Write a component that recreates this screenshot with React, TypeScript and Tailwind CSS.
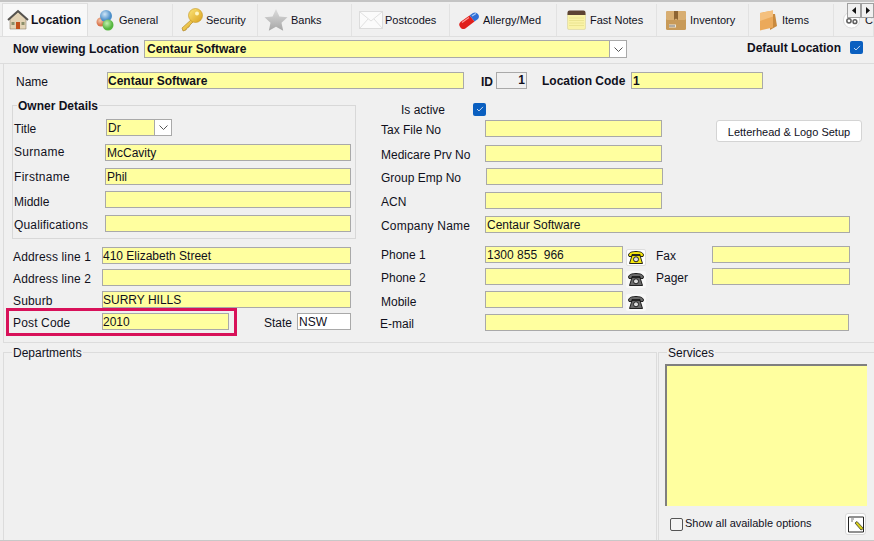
import React from "react";

const HouseIcon = () => (
  <svg viewBox="0 0 22 22" className="w-[22px] h-[22px]">
    <path d="M3 10v10h16V10L11 3z" fill="#e3d3b5" stroke="#8f8168" strokeWidth="0.6" />
    <path d="M1 11 11 2l10 9" fill="none" stroke="#55534f" strokeWidth="2" />
    <rect x="9" y="13" width="4" height="7" fill="#c2501a" />
    <rect x="4.5" y="13" width="3" height="3" fill="#8b8e6a" />
    <rect x="14.5" y="13" width="3" height="3" fill="#8b8e6a" />
  </svg>
);

const GeneralIcon = () => (
  <svg viewBox="0 0 22 22" className="w-[22px] h-[22px]">
    <defs>
      <radialGradient id="gb" cx="40%" cy="35%"><stop offset="0" stopColor="#cfe6f8" /><stop offset="1" stopColor="#4c8fc9" /></radialGradient>
      <radialGradient id="gg" cx="40%" cy="35%"><stop offset="0" stopColor="#c4f0b0" /><stop offset="1" stopColor="#55b63e" /></radialGradient>
      <radialGradient id="go" cx="40%" cy="35%"><stop offset="0" stopColor="#f4c9ae" /><stop offset="1" stopColor="#d9734a" /></radialGradient>
    </defs>
    <circle cx="6" cy="13" r="4.5" fill="url(#go)" />
    <circle cx="11" cy="7" r="6" fill="url(#gb)" />
    <circle cx="13" cy="16" r="5.5" fill="url(#gg)" />
  </svg>
);

const KeyIcon = () => (
  <svg viewBox="0 0 24 24" className="w-[24px] h-[24px]">
    <defs>
      <linearGradient id="ky" x1="0" y1="0" x2="1" y2="1"><stop offset="0" stopColor="#fde77a" /><stop offset="1" stopColor="#d9a01e" /></linearGradient>
    </defs>
    <path d="M12 11 2 20l1 3 3-1 1-2 2-1 1-2 4-4" fill="url(#ky)" stroke="#a87a1a" strokeWidth="0.6" />
    <circle cx="15.5" cy="7.5" r="7" fill="url(#ky)" stroke="#c39320" strokeWidth="0.6" />
    <circle cx="17" cy="5.5" r="2" fill="#fff6c2" />
  </svg>
);

const StarIcon = () => (
  <svg viewBox="0 0 24 24" className="w-[24px] h-[24px]">
    <defs>
      <linearGradient id="st" x1="0" y1="0" x2="0" y2="1"><stop offset="0" stopColor="#dcdcdc" /><stop offset="1" stopColor="#a6a6a6" /></linearGradient>
    </defs>
    <path d="m12 1 3.4 7.4 8.1.9-6 5.5 1.7 8L12 18.700 4.800 22.800l1.700-8-6-5.500 8.100-.9z" fill="url(#st)" />
  </svg>
);

const MailIcon = () => (
  <svg viewBox="0 0 24 18" className="w-[24px] h-[18px]">
    <rect x="0.500" y="0.500" width="23" height="17" fill="#fbfbfb" stroke="#dcdcdc" />
    <path d="m1 1 11 9 11-9M1 17l8-9M23 17l-8-9" fill="none" stroke="#e1e1e1" />
  </svg>
);

const PillIcon = () => (
  <svg viewBox="0 0 22 18" className="w-[22px] h-[18px]">
    <path d="M11.500 4.500 15 2a4 4 0 0 1 5 6l-3.500 2.500z" fill="#2f6fd6" />
    <path d="M11.500 4.500 3 10.500a4 4 0 0 0 5 6.500l8.500-6.500z" fill="#e0201c" />
    <path d="M4 11.500 11 6.500" stroke="#ff9c97" strokeWidth="1.200" />
    <path d="m14 5 4-2.500" stroke="#a9cdfa" strokeWidth="1.200" />
  </svg>
);

const NotesIcon = () => (
  <svg viewBox="0 0 19 20" className="w-[19px] h-[20px]">
    <rect x="0.500" y="3" width="18" height="16.500" rx="1.500" fill="#faf3a8" stroke="#d8d2a0" strokeWidth="0.600" />
    <path d="M0.500 5V2.500a2 2 0 0 1 2-2h14a2 2 0 0 1 2 2V5z" fill="#5d4334" />
    <path d="M2 8h15M2 10.500h15M2 13h15M2 15.500h15" stroke="#e7df8a" strokeWidth="0.800" />
  </svg>
);

const BoxIcon = () => (
  <svg viewBox="0 0 20 19" className="w-[20px] h-[19px]">
    <rect width="20" height="19" rx="1.500" fill="#c89a58" />
    <rect width="20" height="9" rx="1.500" fill="#d8ae72" />
    <path d="M8 0h4v9l-2-1.500L8 9z" fill="#8d6433" />
    <rect x="3" y="13.500" width="7" height="3" fill="#eee7d8" />
    <path d="M4 14v2M6 14v2M8 14v2" stroke="#555" strokeWidth="0.800" />
  </svg>
);

const FolderIcon = () => (
  <svg viewBox="0 0 20 21" className="w-[20px] h-[21px]">
    <path d="M11 4h5l2 12-7 4z" fill="#c98a3e" />
    <path d="M1 3 14 0.500v17L1 20.500z" fill="#eba95a" />
    <path d="M1 3 14 0.500v6L1 11z" fill="#f4c07e" />
  </svg>
);

const GearsIcon = () => (
  <svg viewBox="0 0 20 20" className="w-[20px] h-[20px]">
    <circle cx="10" cy="10" r="9.500" fill="#fff" stroke="#d5d5d5" />
    <circle cx="7" cy="11" r="2.500" fill="none" stroke="#5f5f5f" strokeWidth="1.800" />
    <circle cx="14" cy="12" r="2.200" fill="none" stroke="#5f5f5f" strokeWidth="1.800" />
  </svg>
);

const PhoneIcon = ({ active }: { active?: boolean }) => (
  <div className={`w-[20px] h-[17px] flex items-center justify-center rounded-[2px] ${active ? "bg-white border border-[#dddddd]" : "bg-[#f8f8f8]"}`}>
    <svg viewBox="0 0 16 13" className="w-[16px] h-[13px]">
      <path d="M0.500 4C1 1 5 0.500 8 0.500S15 1 15.500 4l-.5 1.500h-3V3.500H4v2H1z" fill={active ? "#f5e60a" : "#6a6a6a"} stroke="#111" strokeWidth="0.900" />
      <path d="M4 4.500h8l2.500 8h-13z" fill={active ? "#f5e60a" : "#6a6a6a"} stroke="#111" strokeWidth="0.900" />
      <circle cx="8" cy="8.300" r="2.500" fill="#dddddd" stroke="#111" strokeWidth="0.900" />
    </svg>
  </div>
);

const tabs = [
  { label: "General", width: "w-[85px]", pad: "pl-[7px] gap-[2px]", icon: <GeneralIcon /> },
  { label: "Security", width: "w-[85px]", pad: "pl-[7px] gap-[2px]", icon: <KeyIcon /> },
  { label: "Banks", width: "w-[94px]", pad: "pl-[6px] gap-[3px]", icon: <StarIcon /> },
  { label: "Postcodes", width: "w-[98px]", pad: "pl-[7px] gap-[2px]", icon: <MailIcon /> },
  { label: "Allergy/Med", width: "w-[107px]", pad: "pl-[8px] gap-[3px]", icon: <PillIcon /> },
  { label: "Fast Notes", width: "w-[100px]", pad: "pl-[10px] gap-[4px]", icon: <NotesIcon /> },
  { label: "Inventory", width: "w-[92px]", pad: "pl-[9px] gap-[4px]", icon: <BoxIcon /> },
  { label: "Items", width: "w-[85px]", pad: "pl-[10px] gap-[3px]", icon: <FolderIcon /> },
  { label: "C", width: "w-[40px]", pad: "pl-[9px] gap-[5px]", icon: <GearsIcon /> },
];

const Box = ({ className = "", value = "", bold = false }: { className?: string; value?: string; bold?: boolean }) => (
  <div className={`h-[17px] bg-[#ffff9f] border border-[#a9a9a9] px-px leading-[17px] whitespace-pre overflow-hidden shrink-0 ${bold ? "font-bold" : ""} ${className}`}>
    {value}
  </div>
);

const Check = () => (
  <div className="w-[13px] h-[13px] rounded-[2px] bg-[#0a5fc0] flex items-center justify-center shrink-0">
    <svg viewBox="0 0 9 7" className="w-[8px] h-[6px]">
      <path d="m1 3.500 2.300 2.300L8 1" fill="none" stroke="#fff" strokeWidth="0.900" />
    </svg>
  </div>
);

const Chevron = () => (
  <svg viewBox="0 0 9 5" className="w-[9px] h-[5px]">
    <path d="m0.500 0.500 4 4 4-4" fill="none" stroke="#555" />
  </svg>
);

const Row = ({ label, labelClass, className = "", children }: { label: string; labelClass: string; className?: string; children: React.ReactNode }) => (
  <div className={`flex items-center h-[17px] ${className}`}>
    <span className={`shrink-0 whitespace-nowrap ${labelClass}`}>{label}</span>
    {children}
  </div>
);

export default function App() {
  return (
    <div className="w-[874px] h-[541px] overflow-hidden relative bg-[#f0f0f0] flex flex-col font-['Liberation_Sans',Arial,sans-serif] text-[12px] leading-[14px] text-[#10101c]">
      <div className="h-[4px] border-t-2 border-[#c4c4c4] shrink-0" />

      {/* tab strip */}
      <div className="flex h-[33px] pl-[2px] shrink-0 border-b border-[#dfdfdf]">
        <div className="w-[86px] h-[33px] -mt-px shrink-0 bg-[#f8f8f8] border-x border-t border-[#dfdfdf] flex items-center pl-[4px] gap-[2px] font-bold z-10">
          <HouseIcon />
          <span>Location</span>
        </div>
        {tabs.map((t) => (
          <div key={t.label} className={`${t.width} ${t.pad} shrink-0 flex items-center border-r border-[#e2e2e2] whitespace-nowrap text-[11px]`}>
            {t.icon}
            <span>{t.label}</span>
          </div>
        ))}
      </div>

      {/* tab scroll arrows */}
      <div className="absolute right-0 top-[3px] flex z-20">
        <div className="w-[14px] h-[15px] bg-[#f0f0f0] border border-[#a0a0a0] flex items-center justify-center">
          <svg viewBox="0 0 4 7" className="w-[4px] h-[7px]"><path d="M4 0v7L0 3.500z" fill="#111" /></svg>
        </div>
        <div className="w-[13px] h-[15px] bg-[#f0f0f0] border border-[#a0a0a0] flex items-center justify-center">
          <svg viewBox="0 0 4 7" className="w-[4px] h-[7px]"><path d="M0 0v7l4-3.500z" fill="#111" /></svg>
        </div>
      </div>

      {/* location selector */}
      <div className="h-[27px] shrink-0 flex items-start border-b border-[#dcdcdc] pt-[3px] pl-[13px]">
        <span className="w-[131px] mt-[2px] font-bold">Now viewing Location</span>
        <div className="w-[483px] h-[18px] flex border border-[#a9a9a9] bg-[#ffff9f]">
          <span className="flex-1 px-[2px] font-bold leading-[16px]">Centaur Software</span>
          <div className="w-[17px] bg-white border-l border-[#a9a9a9] flex items-center justify-center"><Chevron /></div>
        </div>
        <span className="ml-[120px] mt-px w-[103px] font-bold">Default Location</span>
        <div className="mt-px"><Check /></div>
      </div>

      {/* details */}
      <div className="h-[279px] shrink-0 ml-[3px] border-l border-b border-[#dcdcdc] relative">
        <Row label="Name" labelClass="w-[91px] mt-[2px]" className="mt-[8px] pl-[12px]">
          <Box className="w-[357px] pl-0" value="Centaur Software" bold />
          <span className="ml-[17px] w-[15px] mt-[2px] font-bold">ID</span>
          <div className="w-[31px] h-[17px] border border-[#a9a9a9] text-right pr-[1px] font-bold leading-[15px]">1</div>
          <span className="ml-[15px] w-[89px] font-bold">Location Code</span>
          <Box className="w-[132px]" value="1" bold />
        </Row>

        <div className="flex">
          <div className="w-[370px] shrink-0">
            <fieldset className="ml-[8px] mt-[9px] w-[344px] h-[141px] border border-[#d8d8d8]">
              <legend className="ml-[4px] px-px font-bold translate-y-px">Owner Details</legend>
              <div className="flex items-center h-[17px] mt-[7px] pl-px">
                <span className="w-[92px] shrink-0 mt-[2px]">Title</span>
                <div className="w-[66px] h-[17px] flex border border-[#a9a9a9] bg-[#ffff9f]">
                  <span className="flex-1 px-px leading-[17px]">Dr</span>
                  <div className="w-[17px] bg-white border-l border-[#a9a9a9] flex items-center justify-center"><Chevron /></div>
                </div>
              </div>
              <Row label="Surname" labelClass="w-[91px] -mt-[2px] tracking-[0.3px]" className="mt-[8px] pl-px"><Box className="w-[246px]" value="McCavity" /></Row>
              <Row label="Firstname" labelClass="w-[91px] tracking-[0.3px]" className="mt-[7px] pl-px"><Box className="w-[246px]" value="Phil" /></Row>
              <Row label="Middle" labelClass="w-[91px] mt-[4px]" className="mt-[6px] pl-px"><Box className="w-[246px]" /></Row>
              <Row label="Qualifications" labelClass="w-[91px] mt-[2px] tracking-[0.15px]" className="mt-[7px] pl-px"><Box className="w-[246px]" /></Row>
            </fieldset>
            <div className="pl-[9px]">
              <Row label="Address line 1" labelClass="w-[89px] mt-[2px] tracking-[0.15px]" className="mt-[8px]"><Box className="w-[249px] pl-0" value="410 Elizabeth Street" /></Row>
              <Row label="Address line 2" labelClass="w-[89px] mt-[2px] tracking-[0.15px]" className="mt-[5px]"><Box className="w-[249px]" /></Row>
              <Row label="Suburb" labelClass="w-[89px] mt-[2px] tracking-[0.15px]" className="mt-[5px]"><Box className="w-[249px] pl-0" value="SURRY HILLS" /></Row>
              <Row label="Post Code" labelClass="w-[89px] mt-[2px] tracking-[0.15px]" className="mt-[5px]">
                <Box className="w-[127px] pl-0" value="2010" />
                <span className="ml-[35px] w-[33px] mt-[2px]">State</span>
                <div className="w-[54px] h-[17px] bg-white border border-[#a9a9a9] px-px leading-[17px]">NSW</div>
              </Row>
            </div>
          </div>

          <div className="flex-1">
            <div className="flex items-center h-[14px] mt-[13px]">
              <span className="ml-[27px] w-[72px] mt-[2px]">Is active</span>
              <Check />
            </div>
            <div className="flex items-start mt-[4px]">
              <div>
                <Row label="Tax File No" labelClass="w-[104px] mt-[2px]" className="pl-[7px]"><Box className="w-[177px]" /></Row>
                <Row label="Medicare Prv No" labelClass="w-[104px] mt-[2px]" className="mt-[8px] pl-[7px]"><Box className="w-[177px]" /></Row>
                <Row label="Group Emp No" labelClass="w-[105px] mt-[2px]" className="mt-[6px] pl-[7px]"><Box className="w-[177px]" /></Row>
                <Row label="ACN" labelClass="w-[104px] mt-[2px]" className="mt-[7px] pl-[7px]"><Box className="w-[177px]" /></Row>
              </div>
              <button className="ml-[53px] w-[146px] h-[22px] pt-px bg-white border border-[#d4d4d4] rounded-[3px] text-[11px]">Letterhead &amp; Logo Setup</button>
            </div>
            <Row label="Company Name" labelClass="w-[104px] mt-[2px] tracking-[0.2px]" className="mt-[7px] pl-[7px]"><Box className="w-[365px]" value="Centaur Software" /></Row>
            <Row label="Phone 1" labelClass="w-[104px]" className="mt-[13px] pl-[7px]">
              <Box className="w-[138px]" value="1300 855  966" />
              <div className="ml-[3px] self-start mt-[3px]"><PhoneIcon active /></div>
              <span className="ml-[10px] w-[56px] mt-[2px]">Fax</span>
              <Box className="w-[138px]" />
            </Row>
            <Row label="Phone 2" labelClass="w-[104px] mt-[2px]" className="mt-[5px] pl-[7px]">
              <Box className="w-[138px]" />
              <div className="ml-[3px] self-start mt-[3px]"><PhoneIcon /></div>
              <span className="ml-[10px] w-[56px] mt-[2px]">Pager</span>
              <Box className="w-[138px]" />
            </Row>
            <Row label="Mobile" labelClass="w-[104px] mt-[4px]" className="mt-[6px] pl-[7px]">
              <Box className="w-[138px]" />
              <div className="ml-[3px] self-start mt-[3px]"><PhoneIcon /></div>
            </Row>
            <Row label="E-mail" labelClass="w-[105px] mt-[2px]" className="mt-[6px] pl-[6px]"><Box className="w-[364px]" /></Row>
          </div>
        </div>

        {/* highlight annotation */}
        <div className="absolute left-[2px] top-[244px] w-[231px] h-[28px] border-[3px] border-[#d81159]" />
      </div>

      {/* departments + services */}
      <div className="flex flex-1 pt-[2px] border-b border-[#c8c8c8]">
        <fieldset className="ml-[3px] w-[654px] shrink-0 border-t border-r border-l border-[#dcdcdc]">
          <legend className="ml-[8px] px-px translate-y-px">Departments</legend>
        </fieldset>
        <fieldset className="ml-px flex-1 min-w-0 border-t border-l border-[#dcdcdc]">
          <legend className="ml-[8px] px-px translate-y-px">Services</legend>
          <div className="ml-[6px] mt-[5px] w-[202px] h-[142px] bg-[#ffff9f] border-t-2 border-l-2 border-[#7f7f7f]" />
          <div className="flex items-center mt-[7px] ml-[11px] mr-[8px]">
            <div className="w-[13px] h-[13px] border border-[#555] rounded-[2px] bg-[#f4f4f4]" />
            <span className="ml-[2px] -mt-[2px] text-[11px]">Show all available options</span>
            <div className="ml-auto w-[21px] h-[22px] bg-white border border-[#d8d8d8] rounded-[3px] flex items-center justify-center">
              <svg viewBox="0 0 16 17" className="w-[16px] h-[17px]">
                <path d="M0.500 1h15v15h-15z" fill="#fff" stroke="#222" />
                <path d="M3 3h3M3 5h2" stroke="#555" strokeWidth="0.800" />
                <path d="m7 7 6 7 2.500-1.500L9 5.500z" fill="#d8cf1a" stroke="#222" strokeWidth="0.700" />
              </svg>
            </div>
          </div>
        </fieldset>
      </div>
    </div>
  );
}
